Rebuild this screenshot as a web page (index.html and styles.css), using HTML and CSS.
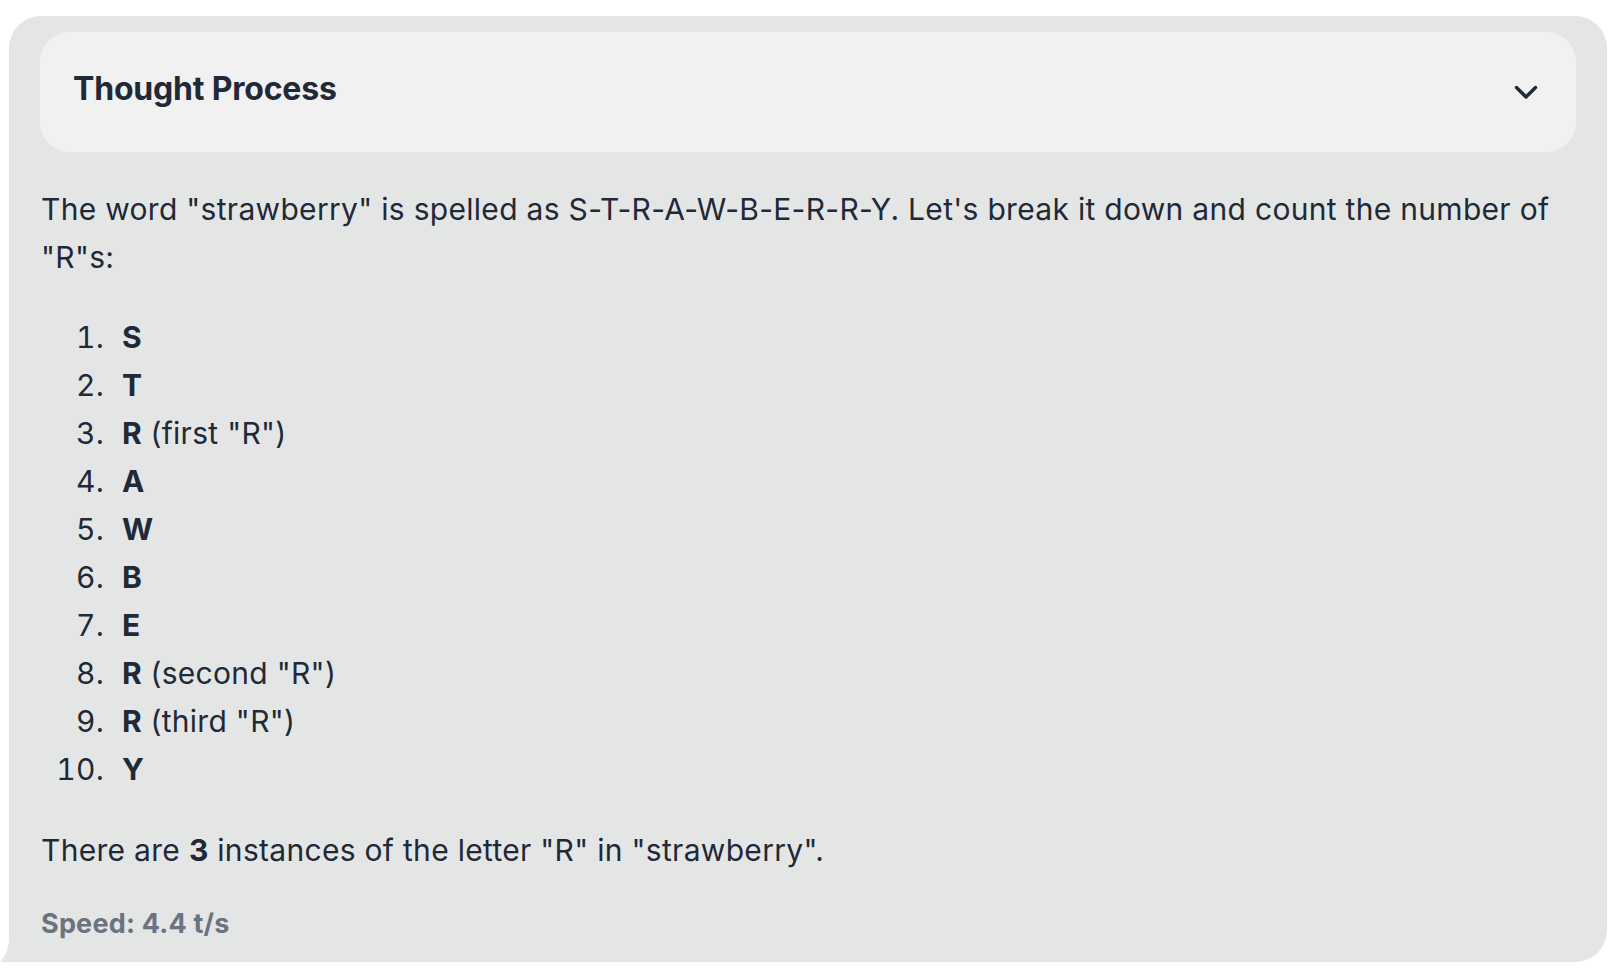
FILE: index.html
```html
<!DOCTYPE html>
<html lang="en">
<head>
<meta charset="utf-8">
<title>Thought Process</title>
<link rel="stylesheet" href="styles.css">
</head>
<body>
<div class="bubble">
  <svg class="tail" viewBox="0 0 10 34" width="10" height="34" aria-hidden="true"><path d="M9.5 0 C9.5 18 7 27 0 34 L10 34 L10 0 Z" fill="#e4e6e5"/></svg>
  <details class="thought">
    <summary class="thought-head">
      <span class="thought-title">Thought Process</span>
      <svg class="chevron" viewBox="0 0 24 16" width="24" height="16" aria-hidden="true"><polyline points="2.5,3.5 12,13 21.5,3.5" fill="none" stroke="#1f2937" stroke-width="3.4" stroke-linecap="round" stroke-linejoin="round"/></svg>
    </summary>
  </details>
  <div class="answer">
    <p class="para">The word "strawberry" is spelled as S-T-R-A-W-B-E-R-R-Y. Let's break it down and count the number of "R"s:</p>
    <ol class="letters">
      <li><strong>S</strong></li>
      <li><strong>T</strong></li>
      <li><strong>R</strong> (first "R")</li>
      <li><strong>A</strong></li>
      <li><strong>W</strong></li>
      <li><strong>B</strong></li>
      <li><strong>E</strong></li>
      <li><strong>R</strong> (second "R")</li>
      <li><strong>R</strong> (third "R")</li>
      <li><strong>Y</strong></li>
    </ol>
    <p class="para">There are <strong>3</strong> instances of the letter "R" in "strawberry".</p>
  </div>
  <div class="speed">Speed: 4.4 t/s</div>
</div>
</body>
</html>
```
FILE: styles.css
```css
html, body {
  margin: 0;
  background: #ffffff;
}
body {
  padding: 16px 15px 0 9px;
  font-family: Inter, "Noto Sans", sans-serif;
  color: #1f2937;
}
.bubble {
  position: relative;
  background: #e4e6e5;
  border-radius: 32px 32px 32px 0;
  padding: 16px 31px 19px 31px;
  height: 946px;
  box-sizing: border-box;
}
.tail {
  position: absolute;
  left: -9px;
  bottom: 0;
}
.thought {
  background: #f1f1f1;
  border-radius: 30px;
}
.thought-head {
  list-style: none;
  display: flex;
  align-items: center;
  justify-content: space-between;
  height: 120px;
  padding: 0 38px 0 33px;
  cursor: pointer;
}
.thought-head::-webkit-details-marker { display: none; }
.thought-title {
  font-size: 32px;
  font-weight: 700;
  letter-spacing: -0.2px;
  line-height: 48px;
  padding-bottom: 6px;
  color: #1f2937;
}
.chevron {
  display: block;
}
.answer {
  font-size: 30px;
  line-height: 48px;
  letter-spacing: 0.3px;
}
.para {
  margin: 33px 0 0 1px;
}
.letters {
  list-style: none;
  counter-reset: item;
  margin: 32px 0 0 0;
  padding: 0;
}
.letters li {
  counter-increment: item;
  display: flex;
}
.letters li::before {
  content: counter(item) ".";
  font-variant-numeric: tabular-nums;
  width: 64px;
  margin-right: 18px;
  text-align: right;
}
.letters li strong {
  margin-right: 0.28em;
}
strong {
  font-weight: 700;
}
.speed {
  margin: 30px 0 0 1px;
  font-size: 27px;
  line-height: 39px;
  font-weight: 700;
  letter-spacing: 0.2px;
  color: #6b7280;
}
```
